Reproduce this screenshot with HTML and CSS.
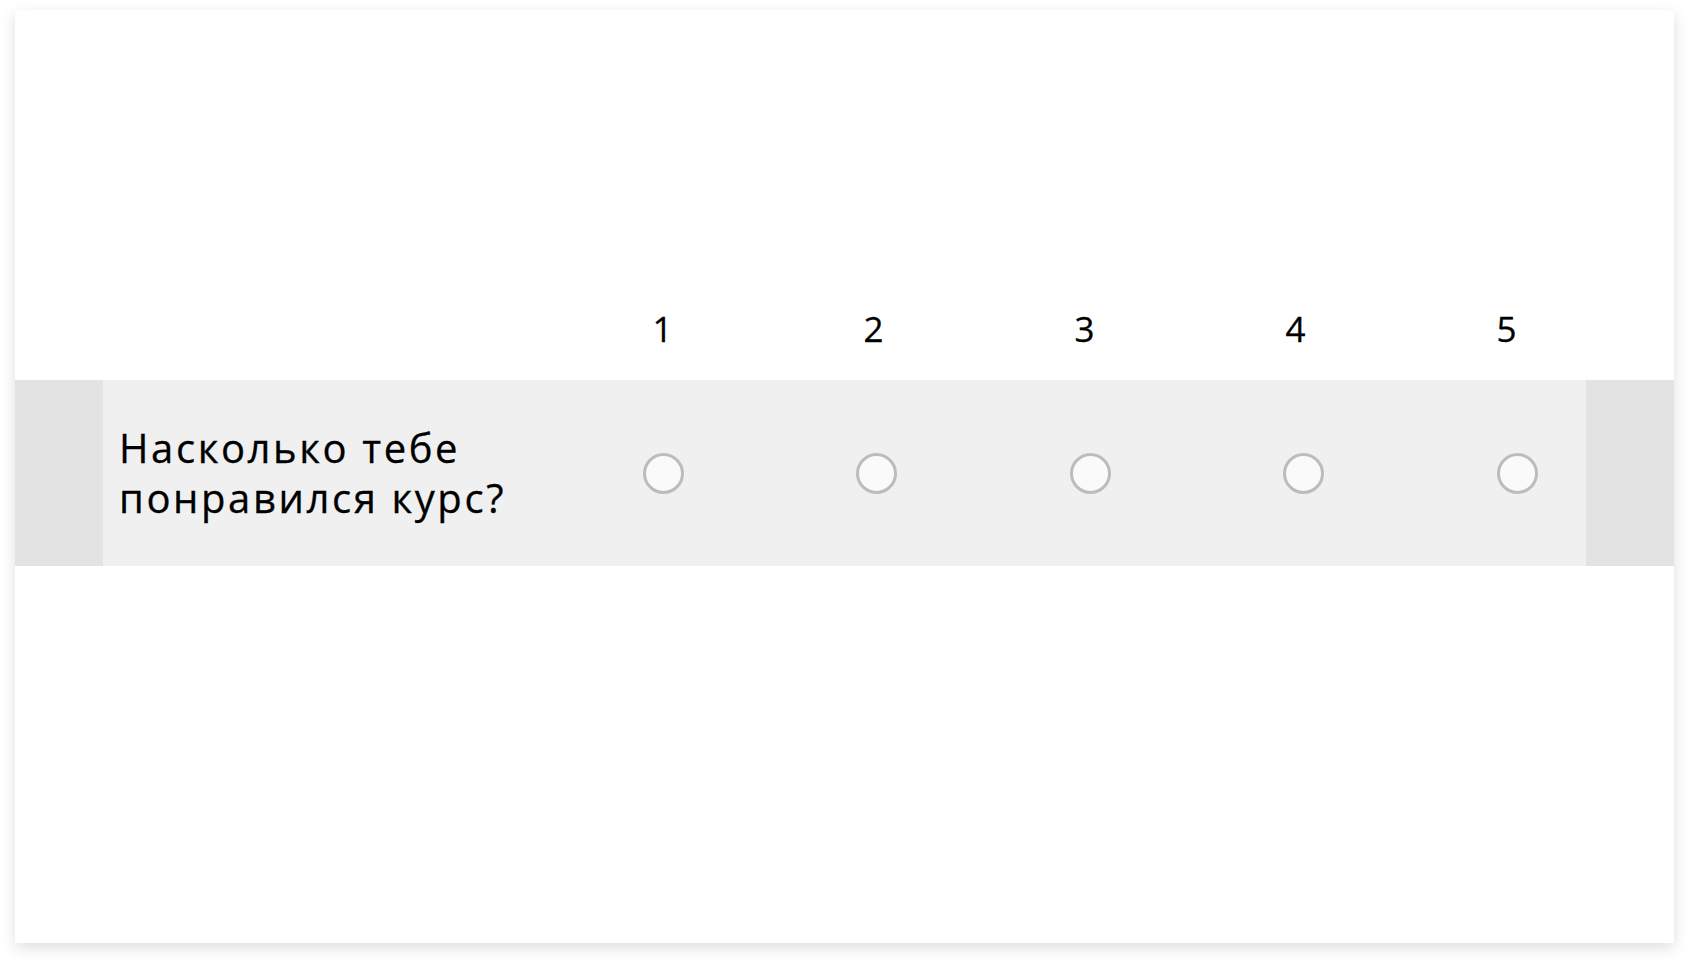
FILE: index.html
```html
<!DOCTYPE html>
<html lang="ru">
<head>
<meta charset="utf-8">
<title>Опрос</title>
<link rel="stylesheet" href="styles.css">
</head>
<body>
<div class="card">
  <div class="scale-head">
    <div class="head-spacer"></div>
    <div class="head-cell">1</div>
    <div class="head-cell">2</div>
    <div class="head-cell">3</div>
    <div class="head-cell">4</div>
    <div class="head-cell">5</div>
  </div>
  <div class="row">
    <div class="row-side"></div>
    <div class="row-main">
      <div class="question">Насколько тебе понравился курс?</div>
      <div class="opt"><span class="radio"></span></div>
      <div class="opt"><span class="radio"></span></div>
      <div class="opt"><span class="radio"></span></div>
      <div class="opt"><span class="radio"></span></div>
      <div class="opt"><span class="radio"></span></div>
    </div>
    <div class="row-side"></div>
  </div>
</div>
</body>
</html>
```

FILE: styles.css
```css
html, body {
  margin: 0;
  padding: 0;
  background: #ffffff;
}
body {
  font-family: "Open Sans", "Noto Sans", sans-serif;
  color: #000;
  min-height: 963px;
  padding-top: 10px;
  box-sizing: border-box;
}
.card {
  width: 1659px;
  height: 933px;
  margin: 0 0 0 15px;
  background: #fff;
  box-shadow: 0 5px 14px rgba(0, 0, 0, 0.13);
  display: flex;
  flex-direction: column;
}
.scale-head {
  height: 370px;
  box-sizing: border-box;
  padding-bottom: 27px;
  display: grid;
  grid-template-columns: 542.5px repeat(5, 211px) 1fr;
  align-items: end;
}
.head-cell {
  font-size: 35px;
  line-height: 48px;
  text-align: center;
  letter-spacing: 1px;
  -webkit-text-stroke: 0.3px #000;
}
.row {
  height: 186px;
  display: flex;
}
.row-side {
  width: 88px;
  flex: 0 0 88px;
  background: #e3e3e3;
}
.row-main {
  flex: 1;
  background: #f0f0f0;
  display: grid;
  grid-template-columns: 539.7px repeat(4, 213.5px) 1fr;
  align-items: center;
}
.question {
  padding-left: 16px;
  width: 440px;
  font-size: 40px;
  line-height: 50px;
  letter-spacing: 2.6px;
  -webkit-text-stroke: 0.3px #000;
}
.opt {
  display: flex;
  align-items: center;
}
.radio {
  display: block;
  width: 41px;
  height: 41px;
  box-sizing: border-box;
  border: 3px solid #bcbcbc;
  border-radius: 50%;
  background: #fafafa;
}
```
